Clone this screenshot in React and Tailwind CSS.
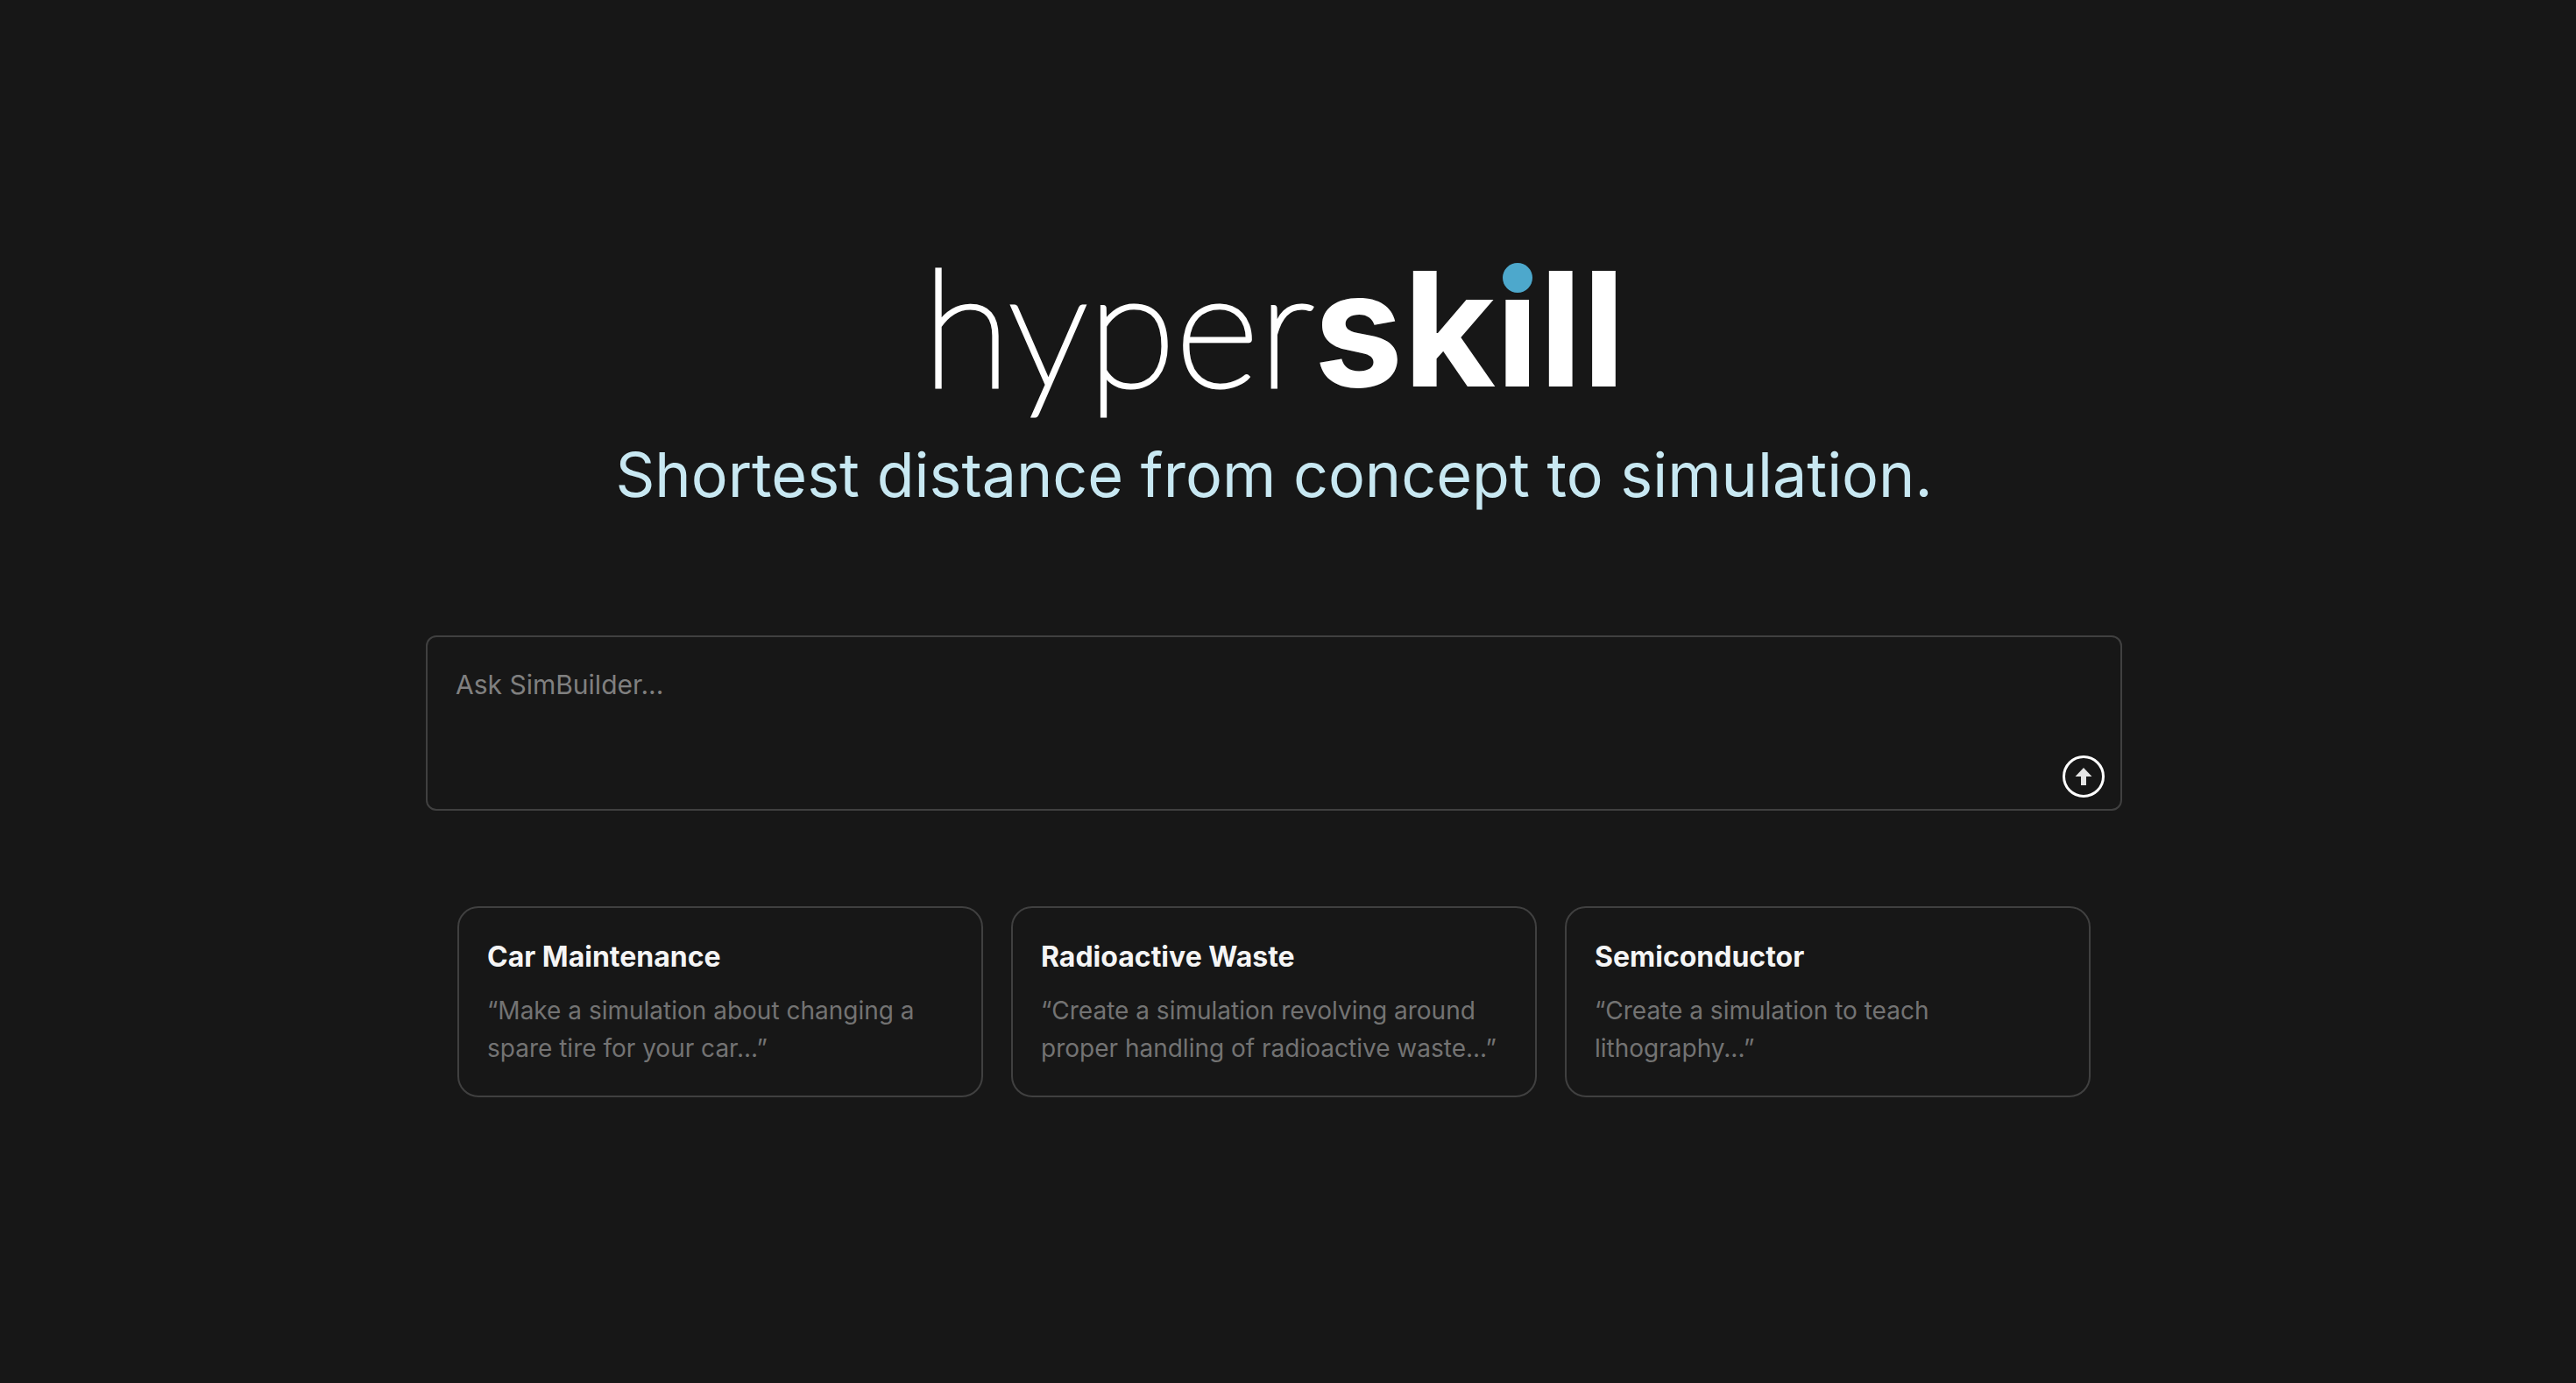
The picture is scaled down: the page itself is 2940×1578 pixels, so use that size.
const EXAMPLES = [
  { title: "Car Maintenance", prompt: "“Make a simulation about changing a spare tire for your car...”" },
  { title: "Radioactive Waste", prompt: "“Create a simulation revolving around proper handling of radioactive waste...”" },
  { title: "Semiconductor", prompt: "“Create a simulation to teach lithography...”" },
];

function Logo() {
  return (
    <h1 className="flex items-baseline justify-center leading-none text-white">
      <span className="font-['Lato',sans-serif] text-[184px] leading-none font-thin [-webkit-text-stroke:5px_white]">hyper</span>
      <span className="text-[182px] leading-none font-bold">
        sk
        <span className="relative inline-block">
          <span className="bg-linear-to-b from-[#4da8cc] from-30% to-white to-30% bg-clip-text text-transparent">i</span>
          <span className="absolute top-4 left-1/2 size-[34px] -translate-x-1/2 rounded-full bg-[#4da8cc]" />
        </span>
        ll
      </span>
    </h1>
  );
}

function PromptBox() {
  return (
    <form className="relative flex w-full max-w-[1936px]" onSubmit={(e) => e.preventDefault()}>
      <textarea
        aria-label="Ask SimBuilder"
        placeholder="Ask SimBuilder..."
        className="h-[200px] w-full resize-none rounded-xl border-2 border-[#404040] bg-transparent px-8 py-8 text-[30px] leading-[44px] text-neutral-100 outline-none placeholder:text-[#808080]"
      />
      <button
        type="submit"
        aria-label="Send"
        className="absolute right-5 bottom-[15px] flex size-12 items-center justify-center rounded-full border-3 border-white"
      >
        <svg viewBox="0 0 20 20" className="size-5 fill-neutral-200" aria-hidden="true">
          <path d="M10 0 19.5 10H13v10H7V10H.5Z" />
        </svg>
      </button>
    </form>
  );
}

function ExampleCard({ title, prompt }) {
  return (
    <button type="button" className="flex flex-col items-start rounded-3xl border-2 border-[#404040] p-8 text-left">
      <span className="text-[32px] leading-[48px] font-bold text-neutral-100">{title}</span>
      <span className="mt-4 text-[28px] leading-[43px] text-[#737373]">{prompt}</span>
    </button>
  );
}

export default function App() {
  return (
    <main className="flex min-h-screen flex-col items-center justify-center bg-[#171717] pr-8 pb-12 font-['Inter',sans-serif]">
      <Logo />
      <p className="mt-9 text-center text-[70px] leading-[80px] text-[#c8e8f2]">
        Shortest distance from concept to simulation.
      </p>
      <div className="mt-[143px] flex w-full justify-center">
        <PromptBox />
      </div>
      <div className="mt-[109px] grid w-full max-w-[1864px] grid-cols-3 gap-8">
        {EXAMPLES.map((e) => (
          <ExampleCard key={e.title} {...e} />
        ))}
      </div>
    </main>
  );
}
